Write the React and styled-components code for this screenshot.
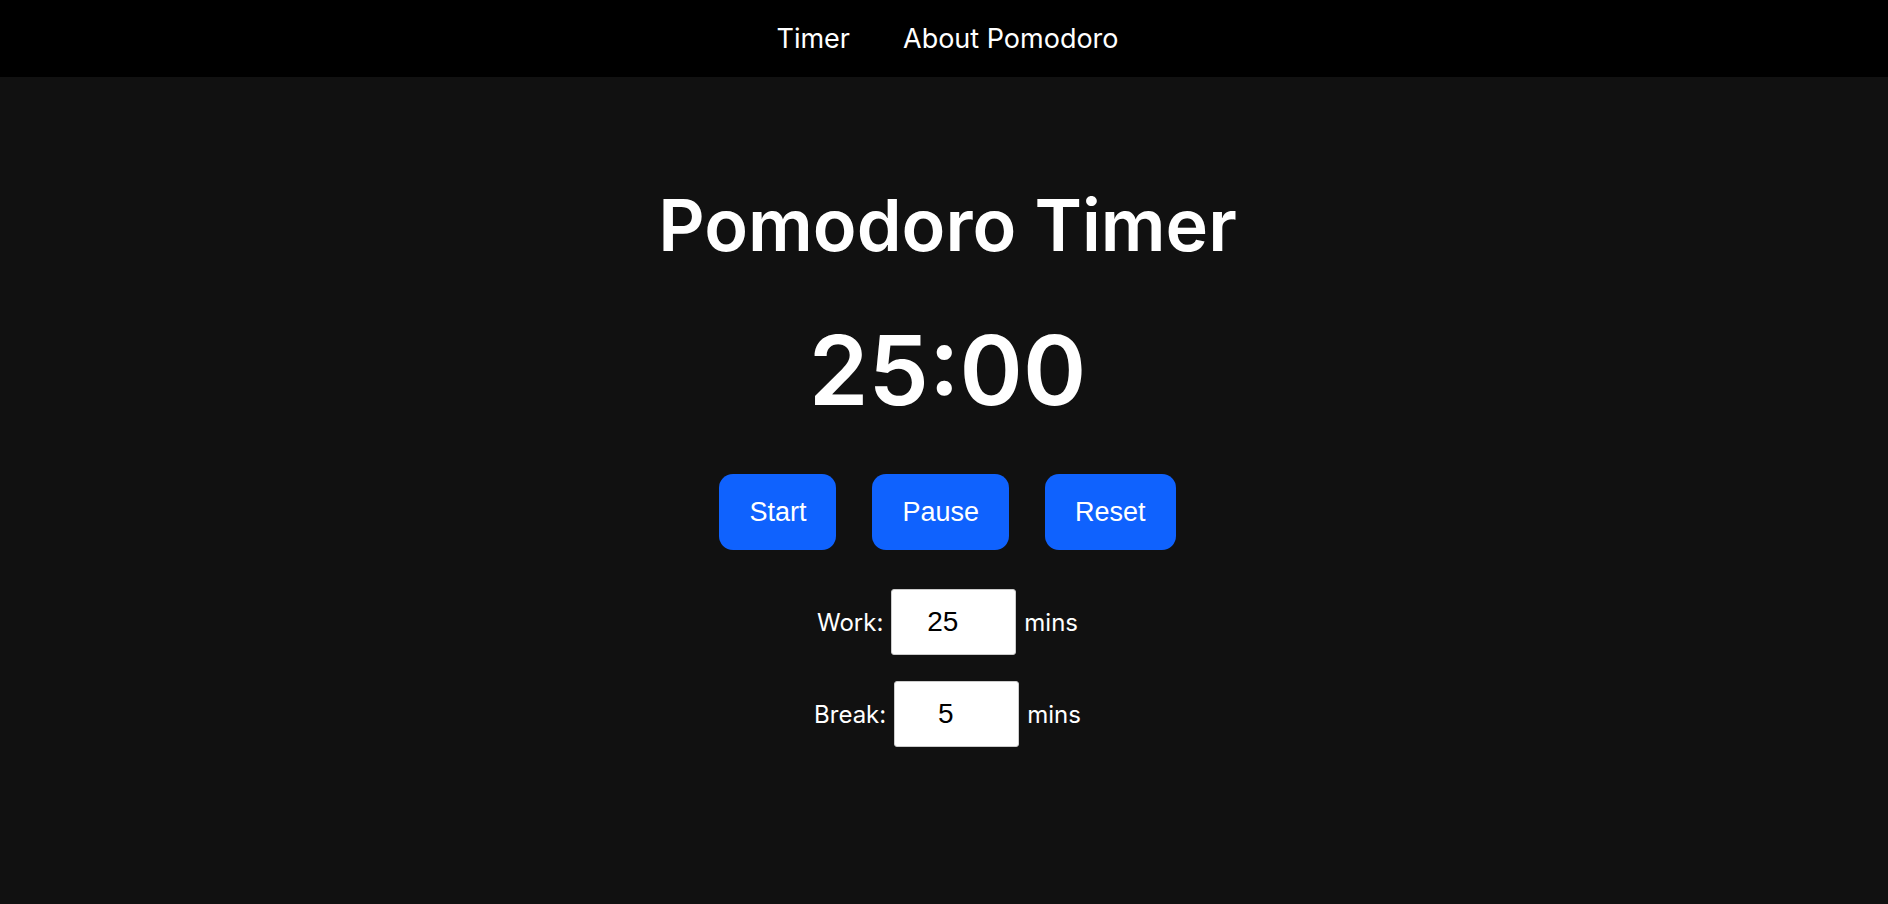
import React, { useState } from "react";
import styled, { createGlobalStyle } from "styled-components";

const GlobalStyle = createGlobalStyle`
  html, body { margin: 0; padding: 0; background: #111111; }
  body { font-family: Inter, "Noto Sans", sans-serif; color: #ffffff; }
  * { box-sizing: border-box; }
`;

const Page = styled.div`
  min-height: 904px;
  background: #111111;
  display: flex;
  flex-direction: column;
`;

const NavBar = styled.nav`
  height: 77px;
  background: #000000;
  display: flex;
  justify-content: center;
  align-items: center;
  gap: 53px;
  padding-left: 7px;
`;

const NavLink = styled.a`
  color: #ffffff;
  font-size: 27px;
  font-weight: 400;
  text-decoration: none;
  cursor: pointer;
`;

const Main = styled.main`
  display: flex;
  flex-direction: column;
  align-items: center;
  padding-top: 104px;
  padding-left: 7px;
`;

const Title = styled.h1`
  margin: 0;
  font-size: 72px;
  font-weight: 600;
  line-height: 87px;
`;

const Clock = styled.div`
  margin-top: 44px;
  font-size: 96px;
  font-weight: 600;
  line-height: 116px;
`;

const ButtonRow = styled.div`
  display: flex;
  gap: 36px;
  margin-top: 46px;
`;

const Button = styled.button`
  height: 76px;
  padding: 0 30px;
  border: none;
  border-radius: 14px;
  background: #0f62fe;
  color: #ffffff;
  font-family: "Liberation Sans", Arial, sans-serif;
  font-size: 27px;
  cursor: pointer;
`;

const Settings = styled.div`
  display: flex;
  flex-direction: column;
  align-items: center;
  gap: 26px;
  margin-top: 39px;
`;

const Field = styled.label`
  display: flex;
  align-items: center;
  gap: 8px;
  font-size: 24px;
`;

const NumberInput = styled.input`
  width: 125px;
  height: 66px;
  border: 1px solid #cccccc;
  border-radius: 3px;
  background: #ffffff;
  color: #000000;
  font-family: "Liberation Sans", Arial, sans-serif;
  font-size: 28px;
  text-align: center;
  padding: 0 15px 0 8px;
`;

export default function App() {
  const [work, setWork] = useState(25);
  const [brk, setBrk] = useState(5);
  return (
    <>
      <GlobalStyle />
      <Page>
        <NavBar>
          <NavLink>Timer</NavLink>
          <NavLink>About Pomodoro</NavLink>
        </NavBar>
        <Main>
          <Title>Pomodoro Timer</Title>
          <Clock>25:00</Clock>
          <ButtonRow>
            <Button>Start</Button>
            <Button>Pause</Button>
            <Button>Reset</Button>
          </ButtonRow>
          <Settings>
            <Field>
              Work:
              <NumberInput type="number" value={work} onChange={(e) => setWork(e.target.value)} />
              mins
            </Field>
            <Field>
              Break:
              <NumberInput type="number" value={brk} onChange={(e) => setBrk(e.target.value)} />
              mins
            </Field>
          </Settings>
        </Main>
      </Page>
    </>
  );
}
